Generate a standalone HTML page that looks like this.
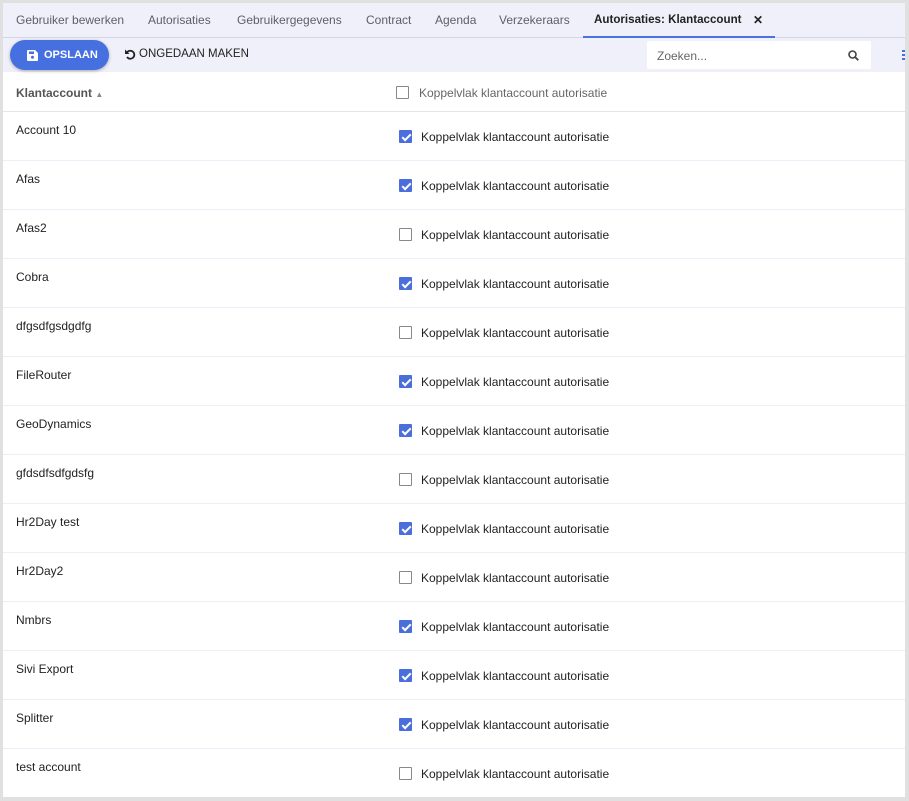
<!DOCTYPE html>
<html><head><meta charset="utf-8"><style>
*{box-sizing:border-box;margin:0;padding:0}
body{width:909px;height:801px;background:#e0e0e0;font-family:"Liberation Sans",Roboto,sans-serif;overflow:hidden;position:relative}
.frame{position:absolute;left:3px;top:3px;width:902px;height:794px;background:#fff;overflow:hidden}
.tabs{height:35px;background:#eff0f9;border-bottom:1px solid #d4d6e4;position:relative;font-size:12px;color:#5c5f6a}
.tab{position:absolute;top:10px;white-space:nowrap}
.tab.act{color:#222;font-weight:bold;top:10px;font-size:11.6px}
.uline{position:absolute;left:580px;width:192px;bottom:-1px;height:2px;background:#4b73e0}
.tb{height:34px;background:#eff0f9;position:relative}
.btn{position:absolute;left:7px;top:2px;width:99px;height:30px;border-radius:15px;background:#4670e0;box-shadow:0 1px 3px rgba(0,0,0,.3);color:#fff;font-weight:bold;font-size:11px}
.btn span{position:absolute;left:34px;top:9px}
.undo{position:absolute;left:121px;top:10px;font-size:11.5px;color:#222}
.undo span{position:absolute;left:15px;top:0;white-space:nowrap}
.search{position:absolute;left:644px;top:3px;width:224px;height:28px;background:#fff;border-radius:2px;font-size:12px;color:#666}
.search span{position:absolute;left:10px;top:8px}
.row{height:49px;border-bottom:1px solid #eceef8;position:relative;font-size:12px;color:#222}
.row .n{position:absolute;left:13px;top:11px}
.cb{position:absolute;left:396px;top:18px;width:13px;height:13px;border:1px solid #888;border-radius:1px;background:#fff}
.cb.on{background:#4a6fdc;border-color:#4a6fdc}
.cb.on:after{content:"";position:absolute;left:3.5px;top:0.5px;width:3px;height:7px;border:solid #fff;border-width:0 2px 2px 0;transform:rotate(45deg)}
.row .l{position:absolute;left:418px;top:18px}
.hdr{height:40px;border-bottom:1px solid #e4e6ee;position:relative;font-size:12px}
.hdr .n{position:absolute;left:13px;top:14px;font-weight:bold;color:#555}
.hdr .cb{top:14px;left:393px}
.hdr .l{position:absolute;left:416px;top:14px;color:#666}
</style></head><body><div class="frame">
<div class="tabs">
<div class="tab" style="left:13px">Gebruiker bewerken</div>
<div class="tab" style="left:145px">Autorisaties</div>
<div class="tab" style="left:234px">Gebruikergegevens</div>
<div class="tab" style="left:363px">Contract</div>
<div class="tab" style="left:432px">Agenda</div>
<div class="tab" style="left:496px">Verzekeraars</div>
<div class="tab act" style="left:591px">Autorisaties: Klantaccount</div>
<div class="tab" style="left:750px;top:10px;font-weight:bold;color:#222;font-size:12px">✕</div>
<div class="uline"></div>
</div>
<div class="tb">
<div class="btn"><svg style="position:absolute;left:17px;top:10px" width="11" height="11" viewBox="0 0 11 11"><path d="M0 1a1 1 0 0 1 1-1h7l3 3v7a1 1 0 0 1-1 1H1a1 1 0 0 1-1-1z" fill="#fff"/><rect x="2" y="1.5" width="5" height="2.5" fill="#4670e0"/><circle cx="5.5" cy="7.3" r="1.5" fill="#4670e0"/></svg><span>OPSLAAN</span></div>
<div class="undo"><svg style="position:absolute;left:0;top:0" width="12" height="12" viewBox="0 0 12 12"><path d="M3 4.5A4 4 0 1 1 3 9" fill="none" stroke="#222" stroke-width="1.8"/><path d="M1 1.5v4.5h4.5z" fill="#222"/></svg><span>ONGEDAAN MAKEN</span></div>
<div class="search"><span>Zoeken...</span><svg style="position:absolute;left:201px;top:9px" width="11" height="11" viewBox="0 0 11 11"><circle cx="4.5" cy="4.5" r="3.5" fill="none" stroke="#444" stroke-width="1.6"/><path d="M7 7l3.3 3.3" stroke="#444" stroke-width="1.8"/></svg></div>
<div style="position:absolute;left:899px;top:12px;width:3px;height:10px;background:repeating-linear-gradient(#4670e0 0 2px,transparent 2px 4px)"></div>
</div>
<div class="hdr"><div class="n">Klantaccount <span style="font-size:8px;color:#888">▲</span></div><div class="cb"></div><div class="l">Koppelvlak klantaccount autorisatie</div></div>
<div class="row"><div class="n">Account 10</div><div class="cb on"></div><div class="l">Koppelvlak klantaccount autorisatie</div></div>
<div class="row"><div class="n">Afas</div><div class="cb on"></div><div class="l">Koppelvlak klantaccount autorisatie</div></div>
<div class="row"><div class="n">Afas2</div><div class="cb"></div><div class="l">Koppelvlak klantaccount autorisatie</div></div>
<div class="row"><div class="n">Cobra</div><div class="cb on"></div><div class="l">Koppelvlak klantaccount autorisatie</div></div>
<div class="row"><div class="n">dfgsdfgsdgdfg</div><div class="cb"></div><div class="l">Koppelvlak klantaccount autorisatie</div></div>
<div class="row"><div class="n">FileRouter</div><div class="cb on"></div><div class="l">Koppelvlak klantaccount autorisatie</div></div>
<div class="row"><div class="n">GeoDynamics</div><div class="cb on"></div><div class="l">Koppelvlak klantaccount autorisatie</div></div>
<div class="row"><div class="n">gfdsdfsdfgdsfg</div><div class="cb"></div><div class="l">Koppelvlak klantaccount autorisatie</div></div>
<div class="row"><div class="n">Hr2Day test</div><div class="cb on"></div><div class="l">Koppelvlak klantaccount autorisatie</div></div>
<div class="row"><div class="n">Hr2Day2</div><div class="cb"></div><div class="l">Koppelvlak klantaccount autorisatie</div></div>
<div class="row"><div class="n">Nmbrs</div><div class="cb on"></div><div class="l">Koppelvlak klantaccount autorisatie</div></div>
<div class="row"><div class="n">Sivi Export</div><div class="cb on"></div><div class="l">Koppelvlak klantaccount autorisatie</div></div>
<div class="row"><div class="n">Splitter</div><div class="cb on"></div><div class="l">Koppelvlak klantaccount autorisatie</div></div>
<div class="row"><div class="n">test account</div><div class="cb"></div><div class="l">Koppelvlak klantaccount autorisatie</div></div>
</div></body></html>
